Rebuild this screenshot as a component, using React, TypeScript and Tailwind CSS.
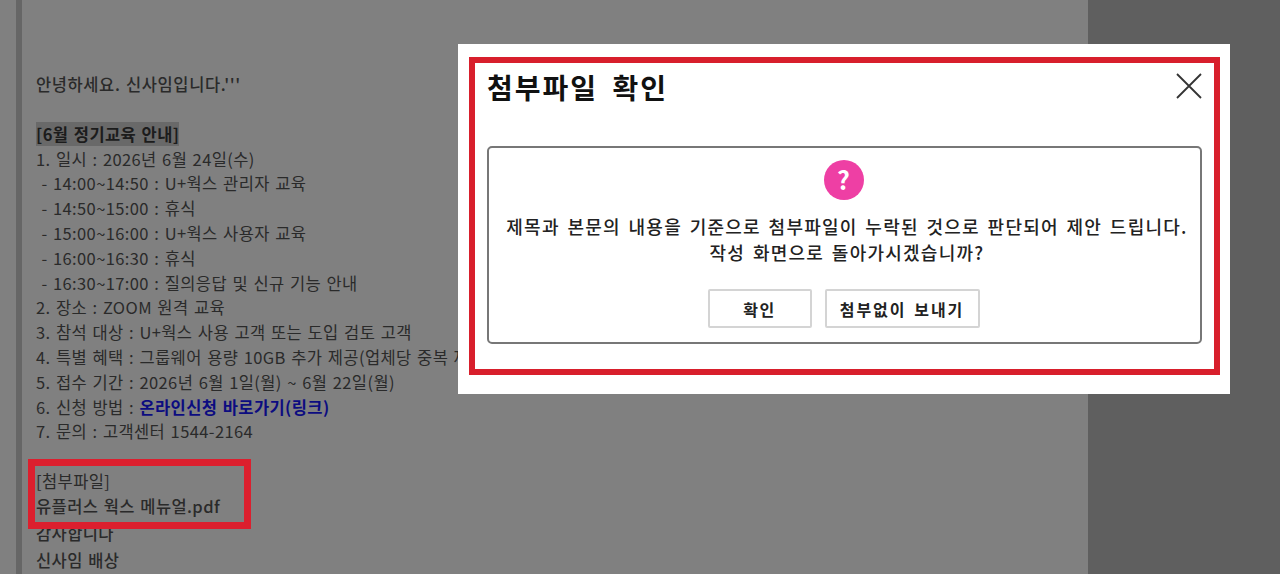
const font = { fontFamily: '"Noto Sans CJK KR", "Noto Sans", sans-serif' };

const lines = [
  { text: '1. 일시 : 2026년 6월 24일(수)' },
  { text: ' - 14:00~14:50 : U+웍스 관리자 교육' },
  { text: ' - 14:50~15:00 : 휴식' },
  { text: ' - 15:00~16:00 : U+웍스 사용자 교육' },
  { text: ' - 16:00~16:30 : 휴식' },
  { text: ' - 16:30~17:00 : 질의응답 및 신규 기능 안내' },
  { text: '2. 장소 : ZOOM 원격 교육' },
  { text: '3. 참석 대상 : U+웍스 사용 고객 또는 도입 검토 고객' },
  { text: '4. 특별 혜택 : 그룹웨어 용량 10GB 추가 제공(업체당 중복 제공 불가)' },
  { text: '5. 접수 기간 : 2026년 6월 1일(월) ~ 6월 22일(월)' },
];

function MailBody() {
  return (
    <div className="relative flex-1 overflow-hidden bg-[#808080] pl-[14px] pt-[72px] text-[16.5px] leading-[24.8px] tracking-[0.4px] text-[#2a2a2a] [word-spacing:1.3px]">
      <p className="whitespace-pre font-medium tracking-[0.6px]">안녕하세요. 신사임입니다.'''</p>
      <p className="h-[25px]" />
      <p><span className="bg-[#696969] font-bold text-[#1c1c1c]">[6월 정기교육 안내]</span></p>
      {lines.map((l) => (
        <p key={l.text} className="whitespace-pre">{l.text}</p>
      ))}
      <p className="whitespace-pre">
        6. 신청 방법 : <span className="font-bold text-[#0c0c80]">온라인신청 바로가기(링크)</span>
      </p>
      <p className="whitespace-pre">7. 문의 : 고객센터 1544-2164</p>
      <p className="h-[25px]" />
      <p className="whitespace-pre">[첨부파일]</p>
      <p className="whitespace-pre font-medium">유플러스 웍스 메뉴얼.pdf</p>
      <p className="mt-[2px] whitespace-pre font-medium">감사합니다</p>
      <p className="mt-[2px] whitespace-pre font-medium">신사임 배상</p>
      {/* highlight on the attachment lines */}
      <div className="absolute left-[6px] top-[459px] h-[70px] w-[223px] border-[7px] border-[#dc1f2e]" />
    </div>
  );
}

function AttachModal() {
  return (
    <div className="absolute left-[458px] top-[44px] h-[350px] w-[772px] bg-white pl-[11px] pr-[10px] pt-[13px]">
      <div className="relative h-[318px] border-[6px] border-[#d81f2c] px-[12px]">
        <h2 className="pt-[4px] text-[28px] font-bold leading-[40px] tracking-[2px] text-[#111] [word-spacing:6px]">첨부파일 확인</h2>
        <button className="absolute right-[12px] top-[10px] text-[#333]">
          <svg width="26" height="26" viewBox="0 0 26 26" fill="none" stroke="currentColor" strokeWidth="1.8">
            <path d="M1 1L25 25M25 1L1 25" />
          </svg>
        </button>
        <div className="mt-[39px] flex h-[198px] flex-col items-center rounded-[5px] border-2 border-[#777] pt-[12px]">
          <div className="mr-[2px] flex h-[40px] w-[40px] items-center justify-center rounded-full bg-[#ee3fa4] text-[25px] font-bold text-white">?</div>
          <p className="ml-[5px] mt-[13px] text-center text-[18px] font-medium leading-[26px] tracking-[1.25px] text-[#222] [word-spacing:2.4px]">
            제목과 본문의 내용을 기준으로 첨부파일이 누락된 것으로 판단되어 제안 드립니다.
            <br />
            작성 화면으로 돌아가시겠습니까?
          </p>
          <div className="mr-[2px] mt-[24px] flex gap-[13px]">
            <button className="h-[39px] w-[104px] rounded-[2px] border-2 border-[#d4d4d4] text-[16px] font-bold tracking-[1.5px] text-[#222]">확인</button>
            <button className="h-[39px] w-[155px] rounded-[2px] border-2 border-[#d4d4d4] text-[16px] font-bold tracking-[2px] text-[#222] [word-spacing:2px]">첨부없이 보내기</button>
          </div>
        </div>
      </div>
    </div>
  );
}

export default function App() {
  return (
    <div className="relative flex h-[574px] w-[1280px] overflow-hidden bg-[#808080]" style={font}>
      <div className="w-[16px] bg-[#808080]" />
      <div className="w-[6px] bg-[#666666]" />
      <MailBody />
      <div className="w-[192px] bg-[#5f5f5f]" />
      <AttachModal />
    </div>
  );
}
